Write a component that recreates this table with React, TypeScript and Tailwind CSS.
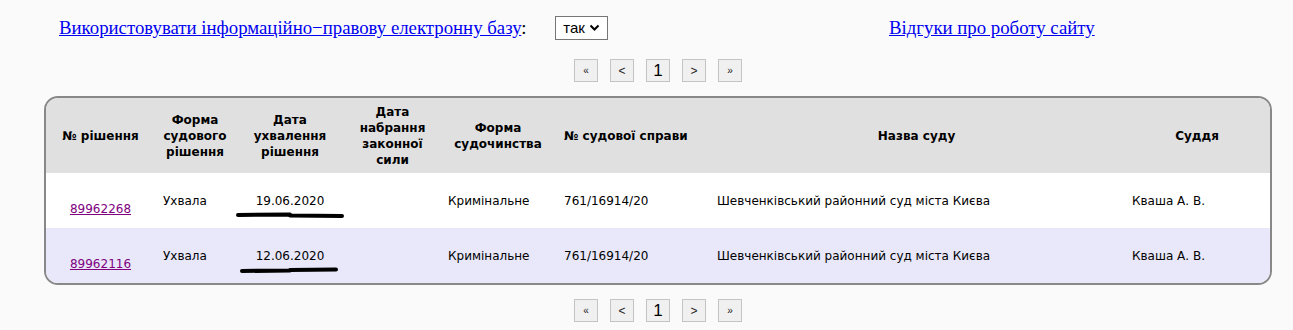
import React from 'react';

const rows = [
  { id: '89962268', form: 'Ухвала', date: '19.06.2020', kind: 'Кримінальне', caseNo: '761/16914/20', court: 'Шевченківський районний суд міста Києва', judge: 'Кваша А. В.', bg: 'bg-white', mark: 'M2 3 L54 2.5 M54 3.5 L106 4' },
  { id: '89962116', form: 'Ухвала', date: '12.06.2020', kind: 'Кримінальне', caseNo: '761/16914/20', court: 'Шевченківський районний суд міста Києва', judge: 'Кваша А. В.', bg: 'bg-[#e8e8fa]', mark: 'M6 4 L54 3.5 M54 3 L100 2.5' },
];

function Pager() {
  const btn = 'w-[24px] h-[23px] flex items-center justify-center border border-[#c4c4c4] bg-[#f0f0f0] text-[#222]';
  return (
    <div className="flex justify-center gap-[12px] font-['Liberation_Sans',sans-serif]">
      <div className={btn + ' text-[10px]'}>«</div>
      <div className={btn + ' text-[12px]'}>&lt;</div>
      <div className={btn + ' text-[17px] text-black'}>1</div>
      <div className={btn + ' text-[12px]'}>&gt;</div>
      <div className={btn + ' text-[10px]'}>»</div>
    </div>
  );
}

export default function App() {
  return (
    <div className="w-[1293px] h-[330px] bg-[#fafafa] overflow-hidden">
      {/* Top line */}
      <div className="flex items-center h-[24px] mt-[16px] pl-[59px] font-['Liberation_Serif',serif] text-[18.8px]">
        <span className="w-[496px]">
          <a href="#" className="text-[#0000ee] underline">Використовувати інформаційно−правову електронну базу</a>
          <span className="text-black">:</span>
        </span>
        <div className="w-[53px] h-[24px] border border-[#767676] bg-white flex items-center justify-center gap-[4px] font-['Liberation_Sans',sans-serif] text-[15px] text-black">
          <span>так</span>
          <svg width="11" height="8" viewBox="0 0 11 8"><path d="M1.5 1.5 L5.5 5.5 L9.5 1.5" fill="none" stroke="black" strokeWidth="2" /></svg>
        </div>
        <a href="#" className="ml-[281px] text-[#0000ee] underline">Відгуки про роботу сайту</a>
      </div>

      <div className="ml-[44px] w-[1228px]">
        <div className="mt-[19px]"><Pager /></div>

        {/* Results */}
        <div className="mt-[14px] border-2 border-[#888] rounded-[14px] overflow-hidden font-['DejaVu_Sans',sans-serif] text-[12px] text-black">
          <table className="w-full table-fixed border-collapse">
            <colgroup>
              <col className="w-[109px]" />
              <col className="w-[80px]" />
              <col className="w-[110px]" />
              <col className="w-[95px]" />
              <col className="w-[116px]" />
              <col className="w-[153px]" />
              <col className="w-[415px]" />
              <col className="w-[146px]" />
            </colgroup>
            <thead>
              <tr className="bg-[#e0e0e0] h-[75px] font-bold leading-[16px]">
                <th className="px-[4px]">№ рішення</th>
                <th className="px-[4px]">Форма судового рішення</th>
                <th className="px-[4px]">Дата ухвалення рішення</th>
                <th className="px-[4px]">Дата набрання законної сили</th>
                <th className="px-[4px]">Форма судочинства</th>
                <th className="px-[4px] text-left pl-[8px]">№ судової справи</th>
                <th className="px-[4px]">Назва суду</th>
                <th className="px-[4px]">Суддя</th>
              </tr>
            </thead>
            <tbody>
              {rows.map((r) => (
                <tr key={r.id} className={r.bg + ' h-[55px]'}>
                  <td className="text-center pt-[16px]">
                    <a href="#" className="text-[#800080] underline">{r.id}</a>
                  </td>
                  <td className="pl-[8px]">{r.form}</td>
                  <td className="text-center">
                    <div className="relative">
                      {r.date}
                      <svg className="absolute left-[1px] top-[20px]" width="110" height="8" viewBox="0 0 110 8">
                        <path d={r.mark} fill="none" stroke="black" strokeWidth="4" strokeLinecap="round" />
                      </svg>
                    </div>
                  </td>
                  <td></td>
                  <td className="pl-[8px]">{r.kind}</td>
                  <td className="pl-[8px]">{r.caseNo}</td>
                  <td className="pl-[8px]">{r.court}</td>
                  <td className="pl-[8px]">{r.judge}</td>
                </tr>
              ))}
            </tbody>
          </table>
        </div>

        <div className="mt-[14px]"><Pager /></div>
      </div>
    </div>
  );
}
